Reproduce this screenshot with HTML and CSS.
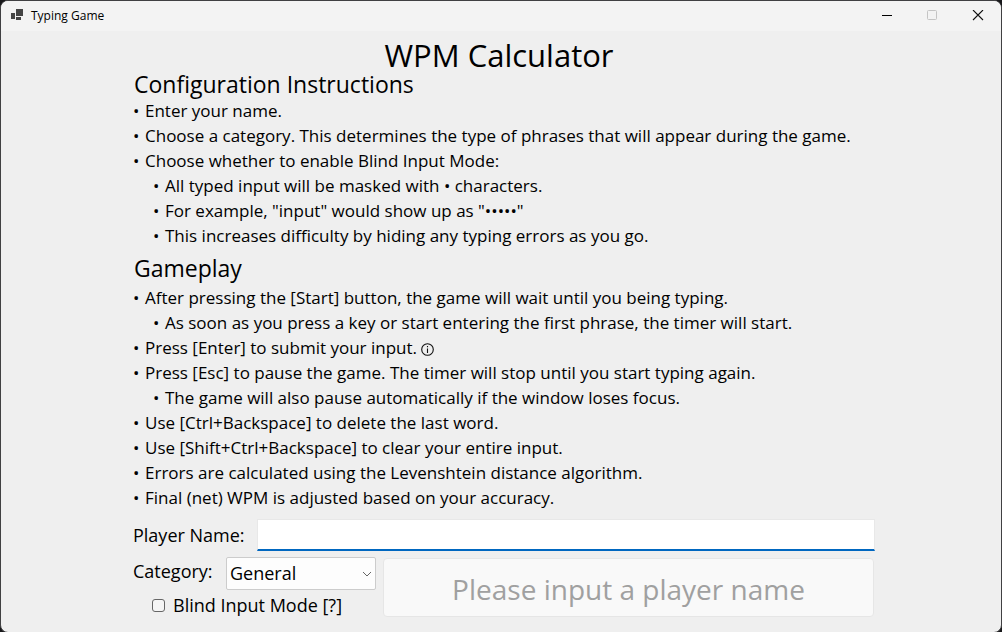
FILE: index.html
```html
<!DOCTYPE html>
<html lang="en">
<head>
<meta charset="utf-8">
<title>Typing Game</title>
<link rel="stylesheet" href="styles.css">
</head>
<body>
<div class="window">
  <header class="titlebar">
    <svg class="app-icon" width="12" height="14" viewBox="0 0 12 14" aria-hidden="true"><path fill="#444" d="M5 0h7v7H5zM0 4h4v6H0zM5 8h5v3H5z"/></svg>
    <span class="caption">Typing Game</span>
    <button class="win-btn" type="button" aria-label="Minimize"><svg width="12" height="12" viewBox="0 0 12 12"><path d="M2 5.5h10" stroke="#000"/></svg></button>
    <button class="win-btn" type="button" aria-label="Maximize" disabled><svg width="12" height="12" viewBox="0 0 12 12"><rect x="1.5" y="0.5" width="9" height="9" rx="1" fill="none" stroke="#c4c4c4"/></svg></button>
    <button class="win-btn" type="button" aria-label="Close"><svg width="12" height="12" viewBox="0 0 12 12"><path d="M1 0l10 10M11 0L1 10" stroke="#111" stroke-width="1.1"/></svg></button>
  </header>
  <main class="content">
    <h1 class="title">WPM Calculator</h1>
    <h2 class="heading">Configuration Instructions</h2>
    <ul class="list">
      <li>Enter your name.</li>
      <li>Choose a category. This determines the type of phrases that will appear during the game.</li>
      <li>Choose whether to enable Blind Input Mode:
        <ul class="sublist">
          <li>All typed input will be masked with • characters.</li>
          <li>For example, "input" would show up as "•••••"</li>
          <li>This increases difficulty by hiding any typing errors as you go.</li>
        </ul>
      </li>
    </ul>
    <h2 class="heading gameplay">Gameplay</h2>
    <ul class="list">
      <li>After pressing the [Start] button, the game will wait until you being typing.
        <ul class="sublist"><li>As soon as you press a key or start entering the first phrase, the timer will start.</li></ul>
      </li>
      <li>Press [Enter] to submit your input. <svg class="info" width="13" height="13" viewBox="0 0 13 13" role="img" aria-label="Info"><circle cx="6.5" cy="6.5" r="5.8" fill="none" stroke="#111" stroke-width="1.1"/><path d="M6.5 5.5v4.5M6.5 3v1.3" stroke="#111" stroke-width="1.1"/></svg></li>
      <li>Press [Esc] to pause the game. The timer will stop until you start typing again.
        <ul class="sublist"><li>The game will also pause automatically if the window loses focus.</li></ul>
      </li>
      <li>Use [Ctrl+Backspace] to delete the last word.</li>
      <li>Use [Shift+Ctrl+Backspace] to clear your entire input.</li>
      <li>Errors are calculated using the Levenshtein distance algorithm.</li>
      <li>Final (net) WPM is adjusted based on your accuracy.</li>
    </ul>
    <form class="form">
      <div class="name-row">
        <label for="player">Player Name:</label>
        <input class="name-input" id="player" type="text">
      </div>
      <div class="bottom">
        <div class="options">
          <div class="category-row">
            <label for="category">Category:</label>
            <div class="select-wrap">
              <select class="category" id="category"><option>General</option></select>
              <svg class="chevron" width="10" height="6" viewBox="0 0 10 6" aria-hidden="true"><path d="M1 1l4 4 4-4" fill="none" stroke="#666"/></svg>
            </div>
          </div>
          <div class="blind-row">
            <input class="check" id="blind" type="checkbox">
            <label for="blind">Blind Input Mode [?]</label>
          </div>
        </div>
        <button class="start" type="submit" disabled>Please input a player name</button>
      </div>
    </form>
  </main>
</div>
</body>
</html>
```
FILE: styles.css
```css
* { box-sizing: border-box; }
body {
  margin: 0;
  background: #18181a;
  color: #000;
  font: 18px/25px "Open Sans", "Noto Sans", sans-serif;
}
.window {
  min-height: 100vh;
  border: 1px solid #404042;
  border-radius: 8px;
  background: #efefef;
  overflow: hidden;
}
.titlebar {
  display: flex;
  align-items: center;
  height: 30px;
  padding-left: 10px;
  background: #f3f3f3;
}
.app-icon { margin-right: 8px; }
.caption {
  flex: 1;
  font-size: 12px;
  line-height: 16px;
}
.win-btn {
  display: flex;
  align-items: center;
  justify-content: center;
  width: 46px;
  height: 30px;
  padding: 0;
  border: 0;
  background: none;
}
.content {
  max-width: 748px;
  margin: 0 auto;
  padding: 9px 0 14px 6px;
}
.title {
  margin: 0 0 1px;
  padding-right: 10px;
  font-size: 31px;
  font-weight: 400;
  line-height: 30px;
  text-align: center;
}
.heading {
  margin: 0;
  padding-left: 1px;
  font-size: 23px;
  font-weight: 400;
  line-height: 27px;
}
.gameplay { margin: 7px 0 3px; }
.list, .sublist {
  margin: 0;
  padding: 0;
  font-size: 17px;
  list-style: none;
}
.list li { padding-left: 12px; }
.list li::before {
  content: "•";
  display: inline-block;
  width: 12px;
  margin-left: -12px;
}
.list .sublist { padding-left: 8px; }
.info { vertical-align: -2px; }
.form {
  display: flex;
  flex-direction: column;
  gap: 6px;
  margin-top: 9px;
}
.name-row {
  display: flex;
  align-items: center;
  gap: 12px;
}
.name-input {
  flex: 1;
  min-width: 0;
  height: 32px;
  padding: 0 4px;
  border: 1px solid #e8e8e8;
  border-bottom: 2px solid #0067c0;
  background: #fff;
  font: inherit;
  outline: none;
}
.bottom {
  display: flex;
  gap: 7px;
  padding-right: 1px;
}
.options { width: 243px; }
.category-row {
  display: flex;
  align-items: center;
  justify-content: space-between;
}
.category-row label { padding-bottom: 4px; }
.select-wrap {
  position: relative;
  width: 150px;
}
.category {
  display: block;
  width: 100%;
  height: 33px;
  padding: 0 3px;
  border: 1px solid #ccc;
  border-radius: 2px;
  background: #fdfdfd;
  color: #000;
  font: inherit;
  appearance: none;
}
.chevron {
  position: absolute;
  right: 4px;
  top: 14px;
  pointer-events: none;
}
.blind-row {
  display: flex;
  align-items: center;
  gap: 8px;
  padding: 3px 0 0 19px;
}
.check {
  width: 13px;
  height: 13px;
  margin: 0;
  border: 1px solid #666;
  border-radius: 3px;
  background: #f5f5f5;
  appearance: none;
}
.check:checked { background: #0067c0; }
.start {
  flex: 1;
  height: 59px;
  margin-top: 1px;
  padding: 4px 8px 0;
  border: 1px solid #e6e6e6;
  border-radius: 4px;
  background: #f9f9f9;
  color: #a0a0a0;
  font: inherit;
  font-size: 28px;
}
```
